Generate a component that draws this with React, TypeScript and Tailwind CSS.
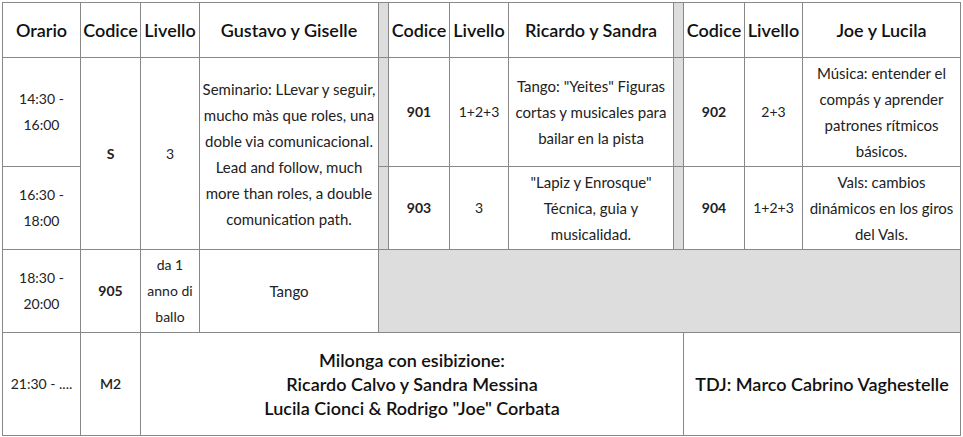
const td = 'border border-[#888] text-center align-middle px-[3px] leading-[26px]';
const desc = 'border border-[#888] text-center align-middle px-[2px] leading-[26px] text-[15px]';
const th = 'border border-[#888] text-center align-middle px-[2px] text-[18px] font-semibold text-[#111]';
const gap = 'border border-[#888] bg-[#ddd]';

export default function App() {
  return (
    <div className="p-[2px] bg-white min-h-screen">
      <table className="w-[959px] table-fixed border-collapse font-['Lato',sans-serif] text-[14px] text-[#222]">
        <colgroup>
          <col className="w-[78px]" />
          <col className="w-[60px]" />
          <col className="w-[59px]" />
          <col className="w-[179px]" />
          <col className="w-[10px]" />
          <col className="w-[61px]" />
          <col className="w-[59px]" />
          <col className="w-[165px]" />
          <col className="w-[10px]" />
          <col className="w-[61px]" />
          <col className="w-[58px]" />
          <col />
        </colgroup>
        <tbody>
          <tr className="h-[55px]">
            <th className={th}>Orario</th>
            <th className={th}>Codice</th>
            <th className={th}>Livello</th>
            <th className={th}>Gustavo y Giselle</th>
            <th className={gap} />
            <th className={th}>Codice</th>
            <th className={th}>Livello</th>
            <th className={th}>Ricardo y Sandra</th>
            <th className={gap} />
            <th className={th}>Codice</th>
            <th className={th}>Livello</th>
            <th className={th}>Joe y Lucila</th>
          </tr>

          <tr className="h-[109px]">
            <td className={td}>14:30 - 16:00</td>
            <td className={`${td} font-bold`} rowSpan={2}>S</td>
            <td className={td} rowSpan={2}>3</td>
            <td className={desc} rowSpan={2}>
              Seminario: LLevar y seguir, mucho màs que roles, una doble via comunicacional. Lead and
              follow, much more than roles, a double comunication path.
            </td>
            <td className={gap} />
            <td className={`${td} font-bold`}>901</td>
            <td className={td}>1+2+3</td>
            <td className={desc}>Tango: "Yeites" Figuras cortas y musicales para bailar en la pista</td>
            <td className={gap} />
            <td className={`${td} font-bold`}>902</td>
            <td className={td}>2+3</td>
            <td className={desc}>Música: entender el compás y aprender patrones rítmicos básicos.</td>
          </tr>

          <tr className="h-[83px]">
            <td className={td}>16:30 - 18:00</td>
            <td className={gap} />
            <td className={`${td} font-bold`}>903</td>
            <td className={td}>3</td>
            <td className={desc}>"Lapiz y Enrosque" Técnica, guia y musicalidad.</td>
            <td className={gap} />
            <td className={`${td} font-bold`}>904</td>
            <td className={td}>1+2+3</td>
            <td className={desc}>Vals: cambios dinámicos en los giros del Vals.</td>
          </tr>

          <tr className="h-[83px]">
            <td className={td}>18:30 - 20:00</td>
            <td className={`${td} font-bold`}>905</td>
            <td className={td}>da 1 anno di ballo</td>
            <td className={desc}>Tango</td>
            <td className={gap} colSpan={8} />
          </tr>

          <tr className="h-[103px]">
            <td className={td}>21:30 - ....</td>
            <td className={`${td} font-semibold`}>M2</td>
            <td className="border border-[#888] text-center align-middle text-[18px] font-semibold leading-[24px] text-[#111]" colSpan={7}>
              Milonga con esibizione:
              <br />
              Ricardo Calvo y Sandra Messina
              <br />
              Lucila Cionci &amp; Rodrigo "Joe" Corbata
            </td>
            <td className="border border-[#888] text-center align-middle text-[18px] font-semibold text-[#111]" colSpan={3}>
              TDJ: Marco Cabrino Vaghestelle
            </td>
          </tr>
        </tbody>
      </table>
    </div>
  );
}
